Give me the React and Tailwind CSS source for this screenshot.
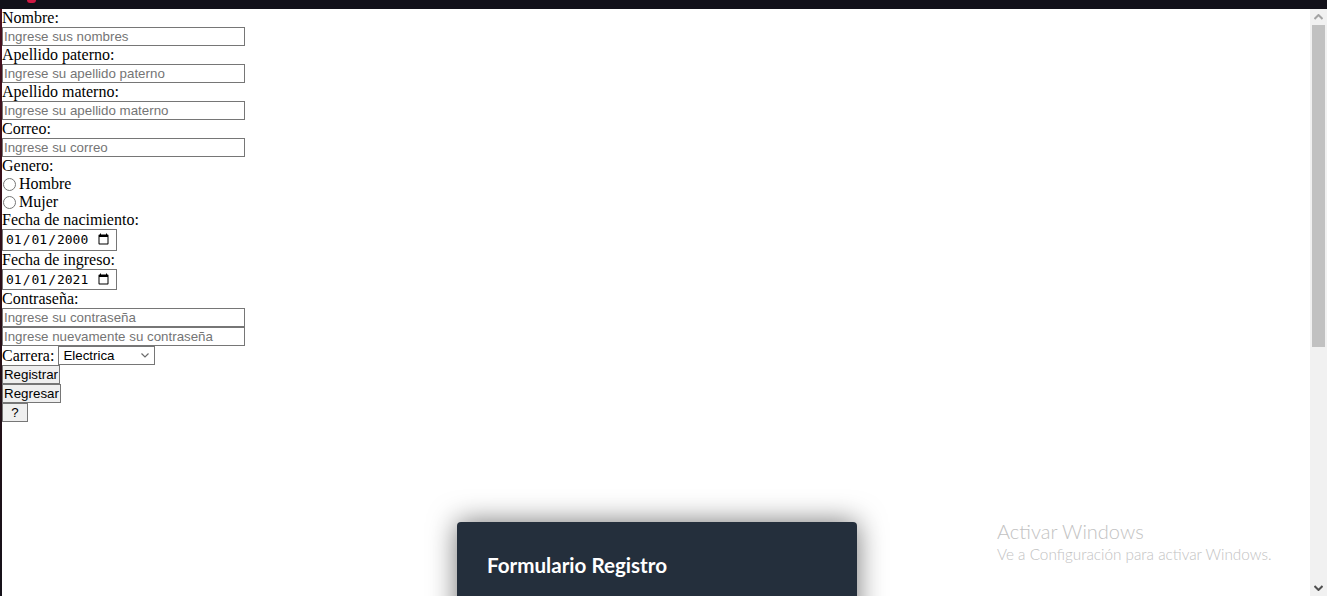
import React from 'react';

const label = "block font-['Liberation_Serif',serif] text-[16px] leading-[18px] text-black";
const textInput =
  "block w-[243px] h-[19px] border border-[#767676] bg-white px-[1px] font-['Liberation_Sans',Arial,sans-serif] text-[13.33px] text-black placeholder:text-[#757575] outline-none";
const dateInput =
  "block w-[115px] h-[21.5px] border border-[#767676] bg-white pl-[2px] pr-[4px] font-['DejaVu_Sans_Mono',monospace] text-[13px] text-black outline-none";
const button =
  "block h-[19px] border border-[#767676] bg-[#efefef] font-['Liberation_Sans',Arial,sans-serif] text-[13.33px] leading-[17px] text-black text-center";

const Field = ({ title, placeholder, type = 'text' }) => (
  <>
    <label className={label}>{title}</label>
    <input type={type} placeholder={placeholder} className={textInput} />
  </>
);

const Scrollbar = () => (
  <div className="w-[17px] bg-[#f1f1f1] flex flex-col">
    <div className="h-[16px] flex items-center justify-center">
      <svg width="9" height="6" viewBox="0 0 9 6">
        <path d="M0.5 5 L4.5 1 L8.5 5" stroke="#a3a3a3" strokeWidth="2" fill="none" />
      </svg>
    </div>
    <div className="px-[2px]">
      <div className="h-[322px] bg-[#c1c1c1]" />
    </div>
    <div className="flex-1" />
    <div className="h-[17px] flex items-center justify-center">
      <svg width="9" height="6" viewBox="0 0 9 6">
        <path d="M0.5 1 L4.5 5 L8.5 1" stroke="#505050" strokeWidth="2" fill="none" />
      </svg>
    </div>
  </div>
);

export default function App() {
  return (
    <div className="relative w-[1327px] h-[596px] overflow-hidden bg-white">
      <div className="relative h-[9px] bg-[#12111a]">
        <span className="absolute left-[27px] top-0 w-[9px] h-[3px] rounded-b-full bg-[#d01843]" />
      </div>

      <div className="flex h-[587px]">
        <div className="w-[2px] bg-gradient-to-b from-[#4a0f1f] via-[#2a0d16] to-[#15121a]" />

        <form className="flex-1 flex flex-col items-start" onSubmit={(e) => e.preventDefault()}>
          <Field title="Nombre:" placeholder="Ingrese sus nombres" />
          <Field title="Apellido paterno:" placeholder="Ingrese su apellido paterno" />
          <Field title="Apellido materno:" placeholder="Ingrese su apellido materno" />
          <Field title="Correo:" placeholder="Ingrese su correo" type="email" />

          <label className={label}>Genero:</label>
          <label className={`${label} flex items-center`}>
            <input type="radio" name="genero" className="m-0 ml-[1px] mr-[3px] w-[13px] h-[13px]" />
            Hombre
          </label>
          <label className={`${label} flex items-center`}>
            <input type="radio" name="genero" className="m-0 ml-[1px] mr-[3px] w-[13px] h-[13px]" />
            Mujer
          </label>

          <label className={label}>Fecha de nacimiento:</label>
          <input type="date" defaultValue="2000-01-01" className={dateInput} />
          <label className={label}>Fecha de ingreso:</label>
          <input type="date" defaultValue="2021-01-01" className={dateInput} />

          <label className={label}>Contraseña:</label>
          <input type="password" placeholder="Ingrese su contraseña" className={textInput} />
          <input type="password" placeholder="Ingrese nuevamente su contraseña" className={textInput} />

          <div className="flex items-center h-[19px]">
            <label className={label}>Carrera:</label>
            <div className="relative ml-[4px]">
              <select
                defaultValue="electrica"
                className="block appearance-none w-[97px] h-[19px] border border-[#767676] bg-white pl-[4px] font-['Liberation_Sans',Arial,sans-serif] text-[13.33px] leading-[17px] text-black outline-none"
              >
                <option value="electrica">Electrica</option>
                <option value="sistemas">Sistemas</option>
                <option value="industrial">Industrial</option>
              </select>
              <svg className="pointer-events-none absolute right-[6px] top-[7px]" width="8" height="5" viewBox="0 0 8 5">
                <path d="M0.5 0.5 L4 4 L7.5 0.5" stroke="#6b6b6b" strokeWidth="1.2" fill="none" />
              </svg>
            </div>
          </div>

          <button type="submit" className={`${button} w-[58px]`}>Registrar</button>
          <button type="button" className={`${button} w-[59px]`}>Regresar</button>
          <button type="button" className={`${button} w-[26px]`}>?</button>
        </form>

        <Scrollbar />
      </div>

      <div className="absolute left-[457px] top-[522px] w-[400px] h-[120px] rounded-t-[4px] bg-[#242f3c] shadow-[0_0_28px_rgba(0,0,0,0.55)] pl-[30px] pt-[31px]">
        <h2 className="font-['Lato',sans-serif] font-bold text-[20.6px] leading-[24px] text-white">Formulario Registro</h2>
      </div>

      <div className="absolute left-[997px] top-[518px] font-['Lato',sans-serif] font-light text-[#c2c2c2]">
        <div className="text-[20px] leading-[26px]">Activar Windows</div>
        <div className="text-[15.3px] leading-[20px]">Ve a Configuración para activar Windows.</div>
      </div>
    </div>
  );
}
